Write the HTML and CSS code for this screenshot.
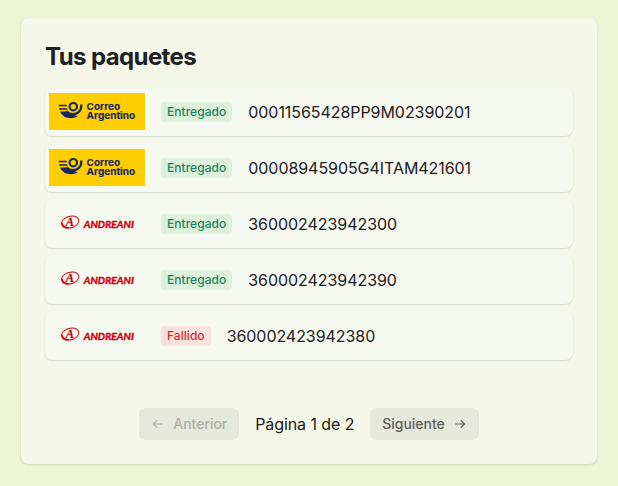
FILE: index.html
```html
<!DOCTYPE html>
<html lang="es">
<head>
<meta charset="utf-8">
<title>Tus paquetes</title>
<link rel="stylesheet" href="styles.css">
</head>
<body>
<svg width="0" height="0" class="symbols" aria-hidden="true">
  <symbol id="correo" viewBox="0 0 96 37">
    <rect width="96" height="37" fill="#ffce00"/>
    <g fill="none" stroke="#152663">
      <path d="M9.6 12.4H18M10.2 16H18.4" stroke-width="1.5"/>
      <circle cx="24.3" cy="13.7" r="3.7" stroke-width="2.1"/>
      <path d="M32.3 11.6V14A8 8 0 0 1 24.3 21.2Q19.8 21.2 17.3 18.2" stroke-width="2.3"/>
    </g>
    <path d="M11 18.6H18.2Q20 21.4 24.3 21.4L28.6 23.6Q25.5 25.3 22 25.3Q14 25.3 11 18.6Z" fill="#152663"/>
    <g class="correo-text">
      <text x="37.6" y="16.8" textLength="33.4" lengthAdjust="spacingAndGlyphs">Correo</text>
      <text x="37.6" y="25.9" textLength="48.6" lengthAdjust="spacingAndGlyphs">Argentino</text>
    </g>
  </symbol>
  <symbol id="andreani" viewBox="0 0 96 37">
    <g transform="translate(21.2 17) rotate(-16)" fill="none" stroke="#d2000c">
      <ellipse rx="8.8" ry="5.8" stroke-width="1"/>
      <path d="M-8.3 -1.6Q-9.2 3.5 -3 5.2" stroke-width="1.8"/>
    </g>
    <text x="16.6" y="21.4" class="andreani-a">A</text>
    <text x="34.8" y="22.6" class="andreani-text" textLength="50" lengthAdjust="spacingAndGlyphs">ANDREANI</text>
  </symbol>
</svg>
<main class="card">
  <h1>Tus paquetes</h1>
  <ul class="list">
    <li class="row"><svg class="logo"><use href="#correo"/></svg><span class="badge ok">Entregado</span><span>00011565428PP9M02390201</span></li>
    <li class="row"><svg class="logo"><use href="#correo"/></svg><span class="badge ok">Entregado</span><span>00008945905G4ITAM421601</span></li>
    <li class="row"><svg class="logo"><use href="#andreani"/></svg><span class="badge ok">Entregado</span><span>360002423942300</span></li>
    <li class="row"><svg class="logo"><use href="#andreani"/></svg><span class="badge ok">Entregado</span><span>360002423942390</span></li>
    <li class="row"><svg class="logo"><use href="#andreani"/></svg><span class="badge fail">Fallido</span><span>360002423942380</span></li>
  </ul>
  <nav class="pager">
    <button class="btn" disabled><svg class="arrow" viewBox="0 0 14 14"><path d="M11.7 7H2.5M6.3 3.2L2.5 7L6.3 10.8"/></svg>Anterior</button>
    <span>Página 1 de 2</span>
    <button class="btn">Siguiente<svg class="arrow" viewBox="0 0 14 14"><path d="M2.3 7H11.5M7.7 3.2L11.5 7L7.7 10.8"/></svg></button>
  </nav>
</main>
</body>
</html>
```
FILE: styles.css
```css
* { box-sizing: border-box; }
body {
  margin: 0;
  padding: 18px 21px 22px;
  background: #eef5d5;
  color: #202020;
  font: 16px/24px Inter, sans-serif;
  letter-spacing: -.06px;
}
.symbols { position: absolute; }
.card {
  height: 446px;
  padding: 24px;
  border-radius: 8px;
  background: #f5f7e9;
  box-shadow: 0 1px 3px rgba(0, 0, 0, .13);
}
h1 {
  margin: 0 0 16px;
  font-size: 24px;
  line-height: 30px;
  font-weight: 700;
  letter-spacing: -.6px;
}
.list {
  display: flex;
  flex-direction: column;
  gap: 8px;
  margin: 0;
  padding: 0;
  list-style: none;
}
.row {
  display: flex;
  align-items: center;
  gap: 16px;
  height: 48px;
  padding: 0 4px;
  border-radius: 8px;
  background: #f6f9f0;
  box-shadow: 0 1px 2px rgba(0, 0, 0, .13);
}
.logo { width: 96px; height: 37px; margin-bottom: 1px; letter-spacing: 0; }
.correo-text { font: 700 9.6px/1 Inter, sans-serif; fill: #152663; stroke: #152663; stroke-width: .1px; }
.andreani-text { font: italic 700 8.6px/1 Lato, sans-serif; fill: #d2000c; stroke: #d2000c; stroke-width: .35px; }
.andreani-a { font: italic 700 13px/1 "Liberation Serif", serif; fill: #d2000c; stroke: #d2000c; stroke-width: .2px; }
.badge {
  height: 20px;
  padding: 0 6px;
  border-radius: 4px;
  font-size: 12px;
  line-height: 20px;
  font-weight: 500;
  letter-spacing: .04px;
}
.ok { background: #dcf0dc; color: #218358; }
.fail { background: #f8e3dc; color: #ce2c31; }
.pager {
  display: flex;
  justify-content: center;
  align-items: center;
  gap: 16px;
  margin-top: 48px;
}
.btn {
  display: flex;
  align-items: center;
  gap: 8px;
  height: 32px;
  padding: 0 12px;
  border: 0;
  border-radius: 6px;
  background: #e6e8db;
  color: #5f6056;
  font: 500 14px/20px Inter, sans-serif;
  letter-spacing: -.04px;
}
.btn:disabled { color: #aeb0a2; }
.pager > span { letter-spacing: -.08px; }
.arrow { width: 14px; height: 14px; fill: none; stroke: currentColor; stroke-width: 1.1; }
```
